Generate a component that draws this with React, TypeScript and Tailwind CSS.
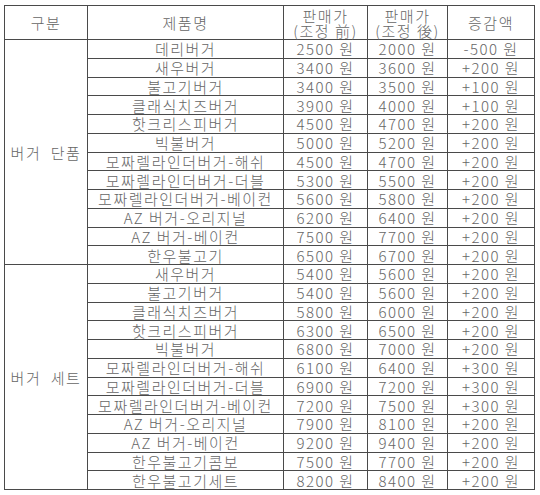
const singles: [string, string, string, string][] = [
  ["데리버거", "2500 원", "2000 원", "-500 원"],
  ["새우버거", "3400 원", "3600 원", "+200 원"],
  ["불고기버거", "3400 원", "3500 원", "+100 원"],
  ["클래식치즈버거", "3900 원", "4000 원", "+100 원"],
  ["핫크리스피버거", "4500 원", "4700 원", "+200 원"],
  ["빅불버거", "5000 원", "5200 원", "+200 원"],
  ["모짜렐라인더버거-해쉬", "4500 원", "4700 원", "+200 원"],
  ["모짜렐라인더버거-더블", "5300 원", "5500 원", "+200 원"],
  ["모짜렐라인더버거-베이컨", "5600 원", "5800 원", "+200 원"],
  ["AZ 버거-오리지널", "6200 원", "6400 원", "+200 원"],
  ["AZ 버거-베이컨", "7500 원", "7700 원", "+200 원"],
  ["한우불고기", "6500 원", "6700 원", "+200 원"],
];

const sets: [string, string, string, string][] = [
  ["새우버거", "5400 원", "5600 원", "+200 원"],
  ["불고기버거", "5400 원", "5600 원", "+200 원"],
  ["클래식치즈버거", "5800 원", "6000 원", "+200 원"],
  ["핫크리스피버거", "6300 원", "6500 원", "+200 원"],
  ["빅불버거", "6800 원", "7000 원", "+200 원"],
  ["모짜렐라인더버거-해쉬", "6100 원", "6400 원", "+300 원"],
  ["모짜렐라인더버거-더블", "6900 원", "7200 원", "+300 원"],
  ["모짜렐라인더버거-베이컨", "7200 원", "7500 원", "+300 원"],
  ["AZ 버거-오리지널", "7900 원", "8100 원", "+200 원"],
  ["AZ 버거-베이컨", "9200 원", "9400 원", "+200 원"],
  ["한우불고기콤보", "7500 원", "7700 원", "+200 원"],
  ["한우불고기세트", "8200 원", "8400 원", "+200 원"],
];

const cell = "border border-[#4a4a4a] p-0 text-center align-middle leading-[17px] whitespace-nowrap";

function Group({ label, rows }: { label: string; rows: [string, string, string, string][] }) {
  return (
    <>
      {rows.map((r, i) => (
        <tr key={i} className="h-[18.75px]">
          {i === 0 && (
            <td rowSpan={rows.length} className={`${cell} whitespace-pre`}>
              {label}
            </td>
          )}
          {r.map((v, j) => (
            <td key={j} className={cell}>
              {v}
            </td>
          ))}
        </tr>
      ))}
    </>
  );
}

export default function App() {
  return (
    <div className="w-[540px] h-[495px] bg-white pl-1 pt-[5px]">
      <table
        className="table-fixed border-collapse text-[15px] font-light tracking-[1.5px] text-[#666666]"
        style={{ fontFamily: '"Noto Sans CJK KR", "Liberation Sans", sans-serif', width: 530 }}
      >
        <colgroup>
          <col className="w-[83px]" />
          <col className="w-[196px]" />
          <col className="w-[84px]" />
          <col className="w-[80px]" />
          <col className="w-[87px]" />
        </colgroup>
        <thead>
          <tr className="h-[34px]">
            <th className={`${cell} font-light`}>구분</th>
            <th className={`${cell} font-light`}>제품명</th>
            <th className={`${cell} font-light !leading-[15px]`}>
              판매가
              <br />
              (조정 前)
            </th>
            <th className={`${cell} font-light !leading-[15px]`}>
              판매가
              <br />
              (조정 後)
            </th>
            <th className={`${cell} font-light`}>증감액</th>
          </tr>
        </thead>
        <tbody>
          <Group label={"버거  단품"} rows={singles} />
          <Group label={"버거  세트"} rows={sets} />
        </tbody>
      </table>
    </div>
  );
}
